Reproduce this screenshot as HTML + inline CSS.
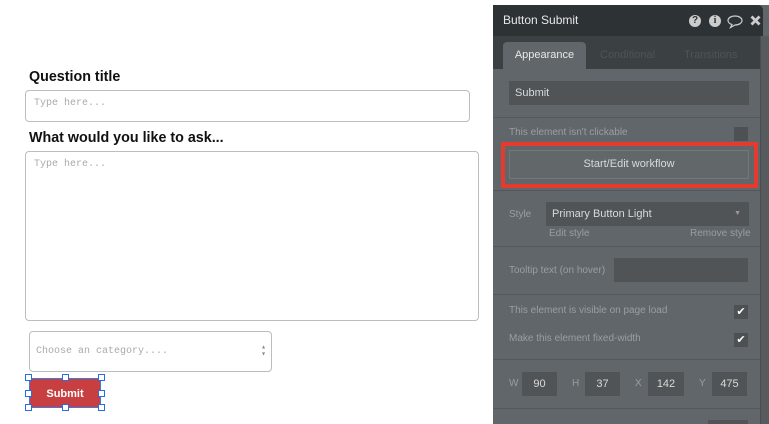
<!DOCTYPE html>
<html><head><meta charset="utf-8"><style>
*{box-sizing:border-box;margin:0;padding:0}
body{width:769px;height:424px;overflow:hidden;background:#fff;position:relative;font-family:"Liberation Sans",sans-serif}
.a{position:absolute}
.lbl{font-weight:bold;font-size:14.3px;color:#111}
.inp{border:1px solid #bdbdbd;border-radius:4px;background:#fff;font-family:"Liberation Mono",monospace;font-size:10px;color:#aaa;padding:7px 8px}
.p{color:#d8dadb;font-size:11px}
.pl{color:#9a9ea1;font-size:10px}
.f{background:#505457}
.sep{height:1px;background:#54585b;left:493px;width:267px}
.cb{width:14px;height:14px;background:#4d5154;color:#fff;font-size:11px;text-align:center;line-height:14px}
.h{width:7px;height:7px;border:1px solid #2a6de0;background:#fff}
.ic{width:12px;height:12px;border-radius:50%;background:#ccc;color:#2d3235;font-size:10px;font-weight:bold;text-align:center;line-height:12px}
</style></head><body>
<div class="a lbl" style="left:29px;top:69px">Question title</div>
<div class="a inp" style="left:25px;top:90px;width:445px;height:32px">Type here...</div>
<div class="a lbl" style="left:29px;top:130px">What would you like to ask...</div>
<div class="a inp" style="left:25px;top:151px;width:454px;height:170px">Type here...</div>
<div class="a inp" style="left:29px;top:331px;width:243px;height:41px;padding-top:14px;padding-left:6px;font-size:10px">Choose an category....<span style="position:absolute;right:5px;top:12px;font-size:8px;line-height:7px;color:#888">▴<br>▾</span></div>
<div class="a" style="left:29px;top:378px;width:72px;height:30px;background:#c73f40;color:#fff;font-weight:bold;font-size:11px;text-align:center;line-height:30px;border:1px solid #3a7be0">Submit</div>
<div class="a h" style="left:25px;top:374px"></div><div class="a h" style="left:62px;top:374px"></div><div class="a h" style="left:98px;top:374px"></div>
<div class="a h" style="left:25px;top:390px"></div><div class="a h" style="left:98px;top:390px"></div>
<div class="a h" style="left:25px;top:404px"></div><div class="a h" style="left:62px;top:404px"></div><div class="a h" style="left:98px;top:404px"></div>

<div class="a" style="left:493px;top:5px;width:276px;height:419px;background:#61666a"></div>
<div class="a" style="left:760px;top:36px;width:9px;height:388px;background:#575b5e;border-left:1px solid #4a4e51"></div>
<div class="a" style="left:493px;top:5px;width:270px;height:31px;background:#2d3235;border-radius:0 5px 0 0"></div>
<div class="a" style="left:503px;top:13px;color:#e8e8e8;font-size:12px">Button Submit</div>
<div class="a ic" style="left:689px;top:15px">?</div>
<div class="a ic" style="left:709px;top:15px;font-family:'Liberation Serif',serif">i</div>
<svg class="a" style="left:726px;top:14px" width="18" height="15" viewBox="0 0 18 15"><path d="M9 2C5 2 2 4 2 6.5 2 8.5 4 10 6 10.5L4.5 13.5 9 11C13 11 16 9 16 6.5 16 4 13 2 9 2Z" fill="none" stroke="#ccc" stroke-width="1.2"/></svg>
<svg class="a" style="left:750px;top:15px" width="11" height="11" viewBox="0 0 11 11"><path d="M1.5 1.5L9.5 9.5M9.5 1.5L1.5 9.5" stroke="#ccc" stroke-width="2.8"/></svg>
<div class="a" style="left:493px;top:36px;width:267px;height:33px;background:#3b4043"></div>
<div class="a" style="left:503px;top:42px;width:83px;height:27px;background:#61666a;border-radius:4px 4px 0 0;color:#e8e8e8;font-size:11px;text-align:center;line-height:27px">Appearance</div>
<div class="a" style="left:600px;top:49px;color:#4f5457;font-size:11px">Conditional</div>
<div class="a" style="left:684px;top:49px;color:#4f5457;font-size:11px">Transitions</div>
<div class="a f p" style="left:509px;top:81px;width:240px;height:24px;line-height:24px;padding-left:6px">Submit</div>
<div class="a sep" style="top:117px"></div>
<div class="a pl" style="left:509px;top:127px">This element isn't clickable</div>
<div class="a cb" style="left:734px;top:127px"></div>
<div class="a" style="left:501px;top:142px;width:257px;height:46px;border:4px solid #e53a2e"></div>
<div class="a p" style="left:509px;top:150px;width:240px;height:29px;background:#62676a;border:1px solid #72777a;text-align:center;line-height:27px">Start/Edit workflow</div>
<div class="a sep" style="top:190px"></div>
<div class="a pl" style="left:509px;top:209px">Style</div>
<div class="a f p" style="left:546px;top:202px;width:203px;height:24px;line-height:24px;padding-left:6px">Primary Button Light<span style="position:absolute;right:8px;font-size:7px;color:#999">▼</span></div>
<div class="a pl" style="left:549px;top:228px">Edit style</div>
<div class="a pl" style="left:690px;top:228px">Remove style</div>
<div class="a sep" style="top:246px"></div>
<div class="a pl" style="left:509px;top:265px">Tooltip text (on hover)</div>
<div class="a f" style="left:614px;top:258px;width:134px;height:24px"></div>
<div class="a sep" style="top:294px"></div>
<div class="a pl" style="left:509px;top:305px">This element is visible on page load</div>
<div class="a cb" style="left:734px;top:305px">✔</div>
<div class="a pl" style="left:509px;top:333px">Make this element fixed-width</div>
<div class="a cb" style="left:734px;top:333px">✔</div>
<div class="a sep" style="top:359px"></div>
<div class="a pl" style="left:509px;top:378px">W</div><div class="a f p" style="left:522px;top:372px;width:35px;height:24px;line-height:24px;text-align:center">90</div>
<div class="a pl" style="left:572px;top:378px">H</div><div class="a f p" style="left:585px;top:372px;width:35px;height:24px;line-height:24px;text-align:center">37</div>
<div class="a pl" style="left:635px;top:378px">X</div><div class="a f p" style="left:648px;top:372px;width:36px;height:24px;line-height:24px;text-align:center">142</div>
<div class="a pl" style="left:699px;top:378px">Y</div><div class="a f p" style="left:712px;top:372px;width:35px;height:24px;line-height:24px;text-align:center">475</div>
<div class="a sep" style="top:408px"></div>
<div class="a f" style="left:708px;top:420px;width:40px;height:4px"></div>
</body></html>
